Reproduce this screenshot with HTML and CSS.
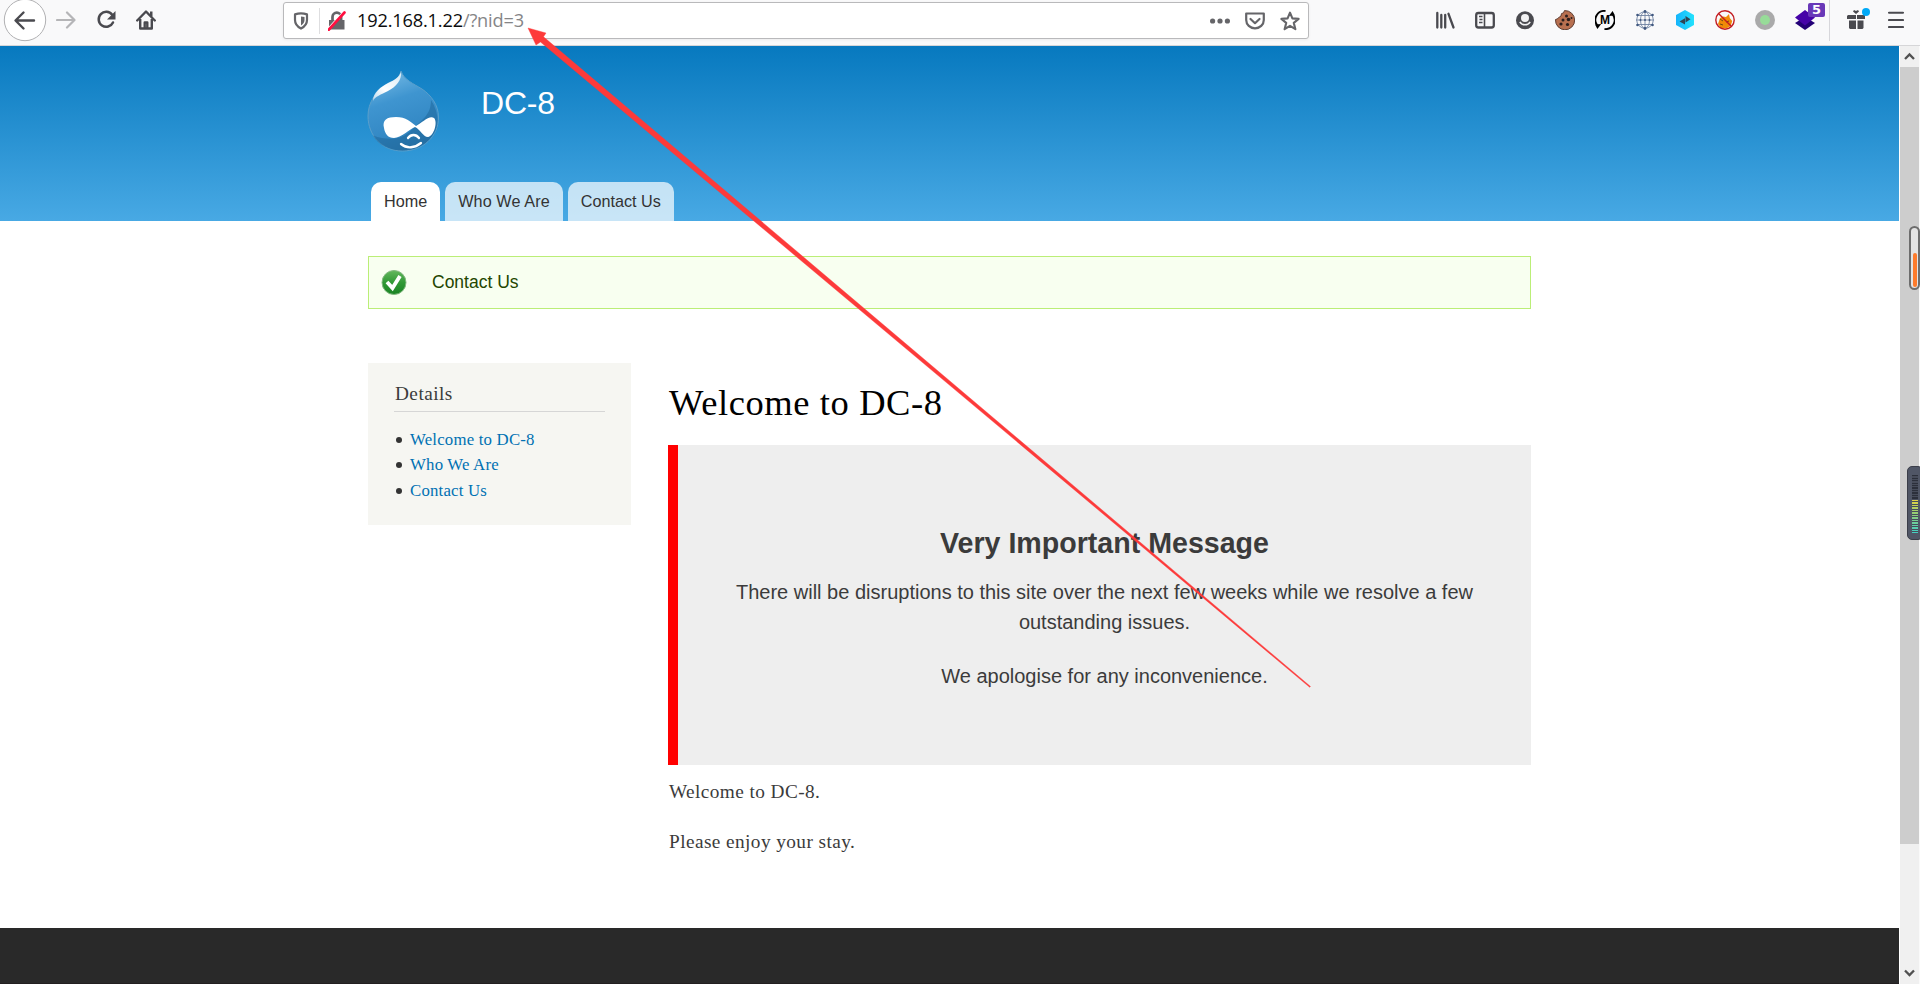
FILE: index.html
```html
<!DOCTYPE html>
<html lang="en">
<head>
<meta charset="utf-8">
<title>Welcome to DC-8</title>
<link rel="stylesheet" href="styles.css">
</head>
<body>
<div class="browser">
  <div class="toolbar">
    <div class="nav">
      <svg class="back" width="44" height="45" viewBox="0 0 44 45" fill="none"><circle cx="22" cy="20" r="20.7" fill="#fff" stroke="#b1b1b3"/><path d="M31 20.5H13M20.5 12.5l-8 8 8 8" stroke="#4a4a4f" stroke-width="2.4" stroke-linecap="round" stroke-linejoin="round"/></svg>
      <svg width="20" height="20" viewBox="0 0 20 20" fill="none" stroke="#b5b5b7" stroke-width="2.2" stroke-linecap="round" stroke-linejoin="round"><path d="M1 10h17M11 2.5l7.5 7.5-7.5 7.500"/></svg>
      <svg width="20" height="20" viewBox="0 0 20 20" fill="none"><path d="M16.200 4.800A7.500 7.500 0 1 0 17 12.500" stroke="#4a4a4f" stroke-width="2.5" stroke-linecap="round"/><path d="M19.500 1v8.500H11z" fill="#4a4a4f"/></svg>
      <svg width="20" height="20" viewBox="0 0 20 20"><path d="M1.200 10.500L10 1.500l8.800 9" fill="none" stroke="#4a4a4f" stroke-width="2.400" stroke-linecap="round" stroke-linejoin="round"/><path d="M14 1.500h2.500v5H14z" fill="#4a4a4f"/><path d="M4.200 9v9.500h11.600V9M8.700 18v-5.500h2.600V18" fill="none" stroke="#4a4a4f" stroke-width="2.400" stroke-linejoin="round"/></svg>
    </div>
    <div class="urlbar">
      <svg width="16" height="18" viewBox="0 0 16 18"><path d="M2 2.400Q8 .2 14 2.400V8q0 5.500-6 8.600Q2 13.500 2 8z" fill="none" stroke="#656569" stroke-width="2.200" stroke-linejoin="round"/><path d="M8 4.500q2 0 3.500.6V8q0 3.300-3.500 5.500z" fill="#656569"/></svg>
      <span class="url-divider"></span>
      <svg width="19" height="20" viewBox="0 0 19 20"><path d="M1 9h15.500v9.500H1z" fill="#656569"/><path d="M4.500 10V6a4.300 4.300 0 0 1 8.600 0v4" fill="none" stroke="#656569" stroke-width="2.700"/><path d="M0 18L16 .5" stroke="#fff" stroke-width="2"/><path d="M.5 19L16.500 1.500" stroke="#ff0f40" stroke-width="2.600" stroke-linecap="round"/></svg>
      <span class="url">192.168.1.22<span class="path">/?nid=3</span></span>
      <svg class="dots" width="20" height="20" viewBox="0 0 20 20" fill="#656569"><circle cx="2.600" cy="10" r="2.600"/><circle cx="10" cy="10" r="2.600"/><circle cx="17.400" cy="10" r="2.600"/></svg>
      <svg width="20" height="20" viewBox="0 0 20 20" fill="none" stroke="#656569" stroke-width="2.200" stroke-linecap="round" stroke-linejoin="round"><path d="M1.200 2.500h17.600V9a8.800 8.300 0 0 1-17.600 0z"/><path d="M5.500 8l4.500 4.200L14.500 8"/></svg>
      <svg width="20" height="20" viewBox="0 0 20 20" fill="none" stroke="#656569" stroke-width="2.100" stroke-linejoin="round"><path d="M10 1.600l2.400 5.800 6.200.5-4.800 4 1.600 6.300L10 14.900l-5.400 3.300 1.600-6.300-4.800-4 6.200-.5z"/></svg>
    </div>
    <div class="extensions">
      <svg width="20" height="20" viewBox="0 0 20 20" stroke="#4a4a4f" stroke-width="2.300" stroke-linecap="round"><path d="M2.300 3v14.500M6.300 5v12.500M10.200 5v12.500M13.500 3.800l5 13.700"/></svg>
      <svg width="20" height="20" viewBox="0 0 20 20" fill="none" stroke="#4a4a4f"><rect x="1.200" y="3" width="17.600" height="14.500" rx="2.200" stroke-width="2.300"/><path d="M9.500 3v14.500" stroke-width="1.600"/><path d="M4 6.500h3.500M4.500 9.500h3M4 12.500h3.500" stroke-width="1.400"/></svg>
      <svg width="20" height="20" viewBox="0 0 20 20"><circle cx="10" cy="10.300" r="9" fill="#4a4a4f"/><circle cx="10" cy="8" r="4" fill="#f2f2f3"/><path d="M4.800 11.800q1.800 3 5.200 3t5.200-3" fill="none" stroke="#f2f2f3" stroke-width="1.500"/></svg>
      <svg width="20" height="20" viewBox="0 0 20 20"><path d="M9.500.6q-.5 3-3 3 .2 3-2.500 3.800Q2 9.500.5 9.500A9.600 9.600 0 1 0 9.500.6z" fill="#b87050" stroke="#5f3c30"/><g fill="#2a1d1c"><circle cx="11.500" cy="6" r="1.500"/><circle cx="8" cy="10" r="1.500"/><circle cx="13.500" cy="9.500" r="1.800"/><circle cx="6" cy="14" r="1.600"/><circle cx="12.500" cy="14.500" r="1.600"/><circle cx="16.500" cy="8" r="1"/></g></svg>
      <svg width="20" height="20" viewBox="0 0 20 20"><path d="M10.500 1A9 9 0 0 0 2.300 15.500M9.500 19A9 9 0 0 0 17.700 4.500" fill="none" stroke="#000" stroke-width="1.900"/><path d="M0 14.500l6.200-.5-3.800 5zM20 5.500L13.800 6l3.800-5z"/><text class="m-glyph" x="10" y="14">M</text></svg>
      <svg width="20" height="20" viewBox="0 0 20 20" fill="none" stroke="#6f82a2" stroke-width=".9"><circle cx="10" cy="10" r="8.300"/><ellipse cx="10" cy="10" rx="4.500" ry="8.300"/><path d="M10 1v18M1 10h18M2.800 5.500h14.400M2.800 14.500h14.400"/><g fill="#40577f" stroke="none"><circle cx="10" cy="1.500" r="1.400"/><circle cx="10" cy="18.500" r="1.400"/><circle cx="2.500" cy="5" r="1.300"/><circle cx="17.500" cy="5" r="1.300"/><circle cx="2.500" cy="15" r="1.300"/><circle cx="17.500" cy="15" r="1.300"/><circle cx="5.500" cy="10" r="1"/><circle cx="14.500" cy="10" r="1"/><circle cx="10" cy="10" r="1"/></g></svg>
      <svg width="20" height="20" viewBox="0 0 20 20"><defs><linearGradient id="hex" x1="0" x2="1"><stop stop-color="#16b4fb"/><stop offset="1" stop-color="#23e2fd"/></linearGradient></defs><path d="M10 0l9 5v10l-9 5-9-5V5z" fill="url(#hex)"/><path d="M4.500 11.500L10 8.300v6.200zM10.500 6l5 3.300-5 3.200z" fill="#304453"/></svg>
      <svg width="20" height="20" viewBox="0 0 20 20"><path d="M3 14l2-6 3-1.500 3 .5 3-3 .8 4 2.400 3-1.500 5-4 2.200H6z" fill="#f08a08"/><path d="M5 9l3 2M11 12l3-1M5 14l3 1" stroke="#6d4b16"/><circle cx="10" cy="10" r="9.200" fill="none" stroke="#c31c20" stroke-width="1.400"/><path d="M3.500 3.500l13 13" stroke="#c31c20" stroke-width="1.400"/></svg>
      <svg width="20" height="20" viewBox="0 0 20 20"><circle cx="10" cy="10" r="10" fill="#aaa"/><circle cx="10" cy="10" r="5" fill="#97dc98"/></svg>
      <span class="badged"><svg width="20" height="20" viewBox="0 0 20 20"><path d="M0 13l10-6 10 6-10 7z" fill="#230076"/><path d="M0 7.500L10 0l10 7.500L10 15.500z" fill="#4603a8"/></svg><b class="badge">5</b></span>
    </div>
    <div class="menu">
      <svg width="24" height="24" viewBox="0 0 24 24" fill="#4a4a4f"><path d="M1 7h8v4H0V8zM10 7h8v4h-8zM2 12.500h7V21H3l-1-1zM10.500 12.500h6V20l-1 1h-5z"/><path d="M9 6L6 3.500 7 2l2 1 2-1 1 1.500z"/><circle cx="19" cy="4" r="4" fill="#00a9f7"/></svg>
      <svg width="16" height="20" viewBox="0 0 16 20" stroke="#4a4a4f" stroke-width="2.100" stroke-linecap="round"><path d="M1 2.700h14M1 10h14M1 17h14"/></svg>
    </div>
  </div>
  <div class="viewport">
    <div class="page">
      <header class="header">
        <div class="brand">
          <svg width="72" height="82" viewBox="0 0 72 82">
            <defs>
              <linearGradient id="drop" x1=".3" y1="0" x2=".6" y2="1"><stop stop-color="#74b9e4"/><stop offset=".35" stop-color="#3f95d0"/><stop offset=".72" stop-color="#3489c5"/><stop offset="1" stop-color="#2d79ad"/></linearGradient>
              <linearGradient id="shine" x1="1" y1="0" x2="0" y2="1"><stop stop-color="#fff" stop-opacity=".75"/><stop offset=".6" stop-color="#fff"/><stop offset="1" stop-color="#fff" stop-opacity=".6"/></linearGradient>
            </defs>
            <path d="M34 1c3 9 13 13 21 18 9 6 16.500 16 16.500 28 0 20-16 34-36 34S1 66 1 46c0-14 8-24 17-30C27 11 32 9 34 1z" fill="url(#drop)" stroke="#5a9fcb"/>
            <path d="M64 30c9 14 8 28 1 36-6 9-17 14-28 14.500-14 .5-25-5-31-15 14 5 29 5 38-5 11-11 20-15 20-30.500z" fill="#1c6498" opacity=".5"/>
            <path d="M34 2c1 8-5 15-13 19C14 25 8 26 6 31 6 22 14 17 21 13c7-3 11-6 13-11z" fill="url(#shine)"/>
            <path d="M17 58C15 50 20 47 29 47c10 0 15 5 20 9 6-3 13-11 18-8 4 4 0 18-6 19-5 0-8-8-13-10-5 2-14 11-21 11-6 0-9-4-10-10z" fill="#fff"/>
            <path d="M41 68c3-4 8-4 11 0M34 74c6 5 14 4 20-1" fill="none" stroke="#fff" stroke-width="2.300" stroke-linecap="round"/>
          </svg>
          <div class="site-name">DC-8</div>
        </div>
        <nav class="tabs"><a class="tab active">Home</a><a class="tab">Who We Are</a><a class="tab">Contact Us</a></nav>
      </header>
      <main class="main">
        <div class="status">
          <svg width="26" height="26" viewBox="0 0 26 26"><defs><linearGradient id="ok" x2="0" y2="1"><stop stop-color="#63b75d"/><stop offset=".5" stop-color="#319936"/><stop offset="1" stop-color="#198323"/></linearGradient></defs><circle cx="13" cy="12.500" r="12" fill="url(#ok)" stroke="#83b980"/><path d="M6 12l5.500 6 7.500-12" fill="none" stroke="#fff" stroke-width="3.800"/></svg>
          <span>Contact Us</span>
        </div>
        <div class="columns">
          <aside class="sidebar">
            <h2>Details</h2>
            <ul><li><a>Welcome to DC-8</a></li><li><a>Who We Are</a></li><li><a>Contact Us</a></li></ul>
          </aside>
          <article class="content">
            <h1>Welcome to DC-8</h1>
            <section class="notice">
              <h2>Very Important Message</h2>
              <p>There will be disruptions to this site over the next few weeks while we resolve a few<br>outstanding issues.</p>
              <p>We apologise for any inconvenience.</p>
            </section>
            <p class="body-text">Welcome to DC-8.</p>
            <p class="body-text">Please enjoy your stay.</p>
          </article>
        </div>
      </main>
      <footer class="footer"></footer>
    </div>
    <div class="scrollbar">
      <svg width="19" height="21" viewBox="0 0 19 21" fill="none" stroke="#505050" stroke-width="2.300"><path d="M5 13l4.500-4.500L14 13"/></svg>
      <div class="thumb"></div>
      <svg class="down" width="19" height="21" viewBox="0 0 19 21" fill="none" stroke="#505050" stroke-width="2.300"><path d="M5 7.500L9.500 12 14 7.500"/></svg>
    </div>
  </div>
  <div class="gauge"><div class="gauge-fill"></div></div>
  <div class="meter"><div class="meter-bars"></div></div>
  <svg class="arrow" width="1920" height="984" viewBox="0 0 1920 984"><path d="M528 28l18 5-2.500 3.800L1310.500 686.500l-.8.800L540.500 42l-4.500 3z" fill="#fd3a3a" stroke="#fd3a3a" stroke-width=".4"/></svg>
</div>
</body>
</html>
```
FILE: styles.css
```css
* { box-sizing: border-box; }
body { margin: 0; font-family: "Liberation Sans", Arial, sans-serif; color: #3b3b3b; background: #fff; }
svg { display: block; flex: none; }
h1, h2, p, ul { margin: 0; padding: 0; font-weight: normal; }
.browser { position: relative; width: 1920px; height: 984px; overflow: hidden; display: flex; flex-direction: column; }

.toolbar { height: 46px; flex: none; display: flex; background: #f9f9fa; border-bottom: 1px solid #d6d6d8; }
.nav { width: 283px; padding-left: 3px; display: flex; align-items: flex-start; }
.nav svg:not(.back) { margin-top: 10px; }
.nav svg:nth-child(2) { margin-left: 9px; }
.nav svg:nth-child(3) { margin-left: 20px; }
.nav svg:nth-child(4) { margin-left: 20px; }
.urlbar { width: 1026px; height: 37px; margin-top: 2px; padding: 0 8px 0 9px; display: flex; align-items: center; background: #fff; border: 1px solid #b9b9bb; border-radius: 3px; box-shadow: 0 1px 3px rgba(0, 0, 0, .06); }
.url-divider { width: 1px; height: 26px; margin: 0 8px 0 10px; background: #dedee0; }
.url { margin-left: 10px; padding-bottom: 2px; font: 18.2px/34px "Open Sans", sans-serif; letter-spacing: -.17px; color: #0c0c0d; }
.path { color: #858587; }
.dots { margin-left: auto; }
.dots ~ svg { margin-left: 15px; }
.extensions { margin-left: 126px; padding-top: 10px; display: flex; gap: 20px; }
.m-glyph { font: bold 12px "Liberation Sans", sans-serif; text-anchor: middle; }
.badged { position: relative; width: 20px; }
.badge { position: absolute; left: 13px; top: -7px; width: 17px; height: 14px; border-radius: 2px; background: #6938b8; color: #fff; font: bold 13px/14px "DejaVu Sans", sans-serif; text-align: center; }
.menu { height: 41px; margin-left: 14px; padding: 8px 0 0 17px; display: flex; gap: 17px; border-left: 1px solid #d7d7db; }
.menu svg:last-child { margin-top: 2px; }

.viewport { flex: 1; min-height: 0; display: flex; }
.page { width: 1899px; display: flex; flex-direction: column; }
.header { height: 175px; flex: none; padding: 24px 0 0 367px; display: flex; flex-direction: column; justify-content: space-between; background: linear-gradient(#0779bf, #48a9e4); }
.brand { display: flex; }
.site-name { margin: 14px 0 0 42px; font-size: 32px; line-height: 38px; letter-spacing: -.2px; color: #fffeff; }
.tabs { display: flex; gap: 5px; padding-left: 4px; }
.tab { height: 39px; padding: 0 13px; border-radius: 10px 10px 0 0; font-size: 16.2px; line-height: 38px; color: #333; background: rgba(255, 255, 255, .7); }
.tab:nth-child(2) { letter-spacing: .1px; }
.tab.active { background: #fff; }
.main { flex: 1; width: 1163px; margin: 35px 0 0 368px; }
.status { height: 53px; padding-left: 12px; display: flex; align-items: center; gap: 25px; background: #f8fff0; border: 1px solid #be7; color: #234600; font-size: 17.500px; }
.columns { margin-top: 54px; display: flex; align-items: flex-start; gap: 37px; }
.sidebar { width: 263px; height: 162px; padding: 17px 26px; background: #f6f6f2; font-family: Georgia, "Liberation Serif", serif; }
.sidebar h2 { height: 32px; padding-left: 1px; border-bottom: 1px solid #d6d6d6; font-size: 19.300px; line-height: 28px; letter-spacing: .45px; }
.sidebar ul { margin-top: 15px; list-style: none; }
.sidebar li { display: flex; align-items: center; gap: 8px; height: 25.600px; padding-left: 2px; font-size: 16.800px; letter-spacing: .2px; }
.sidebar li::before { content: ""; width: 6px; height: 6px; border-radius: 50%; background: #333; }
.sidebar a { color: #0071b3; }
.content { width: 863px; font-family: Georgia, "Liberation Serif", serif; }
.content h1 { height: 82px; padding: 19px 0 0 1px; font-size: 36.500px; line-height: 42px; letter-spacing: .6px; color: #000; }
.notice { height: 320px; padding-top: 79px; border-left: 10px solid #f00; background: #eee; text-align: center; font-family: "Liberation Sans", Arial, sans-serif; font-size: 20px; line-height: 30px; }
.notice h2 { margin-bottom: 15px; font-size: 28.600px; line-height: 38px; font-weight: bold; }
.notice p + p { margin-top: 24px; }
.body-text { height: 50px; padding: 12px 0 0 1px; font-size: 19.300px; line-height: 30px; letter-spacing: .42px; }
.footer { height: 56px; flex: none; background: #292929; border-bottom: 1px solid #221f20; }
.scrollbar { width: 20px; margin-left: 1px; border-right: 1px solid #fafafa; display: flex; flex-direction: column; background: #f0f0f0; }
.thumb { height: 777px; background: #cdcdcd; }
.down { margin-top: auto; }

/* Desktop widgets docked to the right screen edge */
.gauge { position: absolute; left: 1909px; top: 226px; width: 11px; height: 64px; padding: 1px; border: 2px solid #6d6d6d; border-radius: 6px; background: #e3e3e3; display: flex; align-items: flex-end; justify-content: center; }
.gauge-fill { width: 4px; height: 34px; border-radius: 2px; background: #fd7b2c; }
.meter { position: absolute; left: 1907px; top: 466px; width: 16px; height: 74px; padding: 8px 0 0 4px; border: 1px solid #3b3e49; border-radius: 5px; background: #505666; }
.meter-bars { width: 6px; height: 58px; background: repeating-linear-gradient(transparent 0 1.300px, #474c5a 1.300px 2.500px), linear-gradient(#2c303b 0 24px, #e2d344 25px, #96ce74 38px, #43d0c4 58px); }

.arrow { position: absolute; left: 0; top: 0; pointer-events: none; }
```
